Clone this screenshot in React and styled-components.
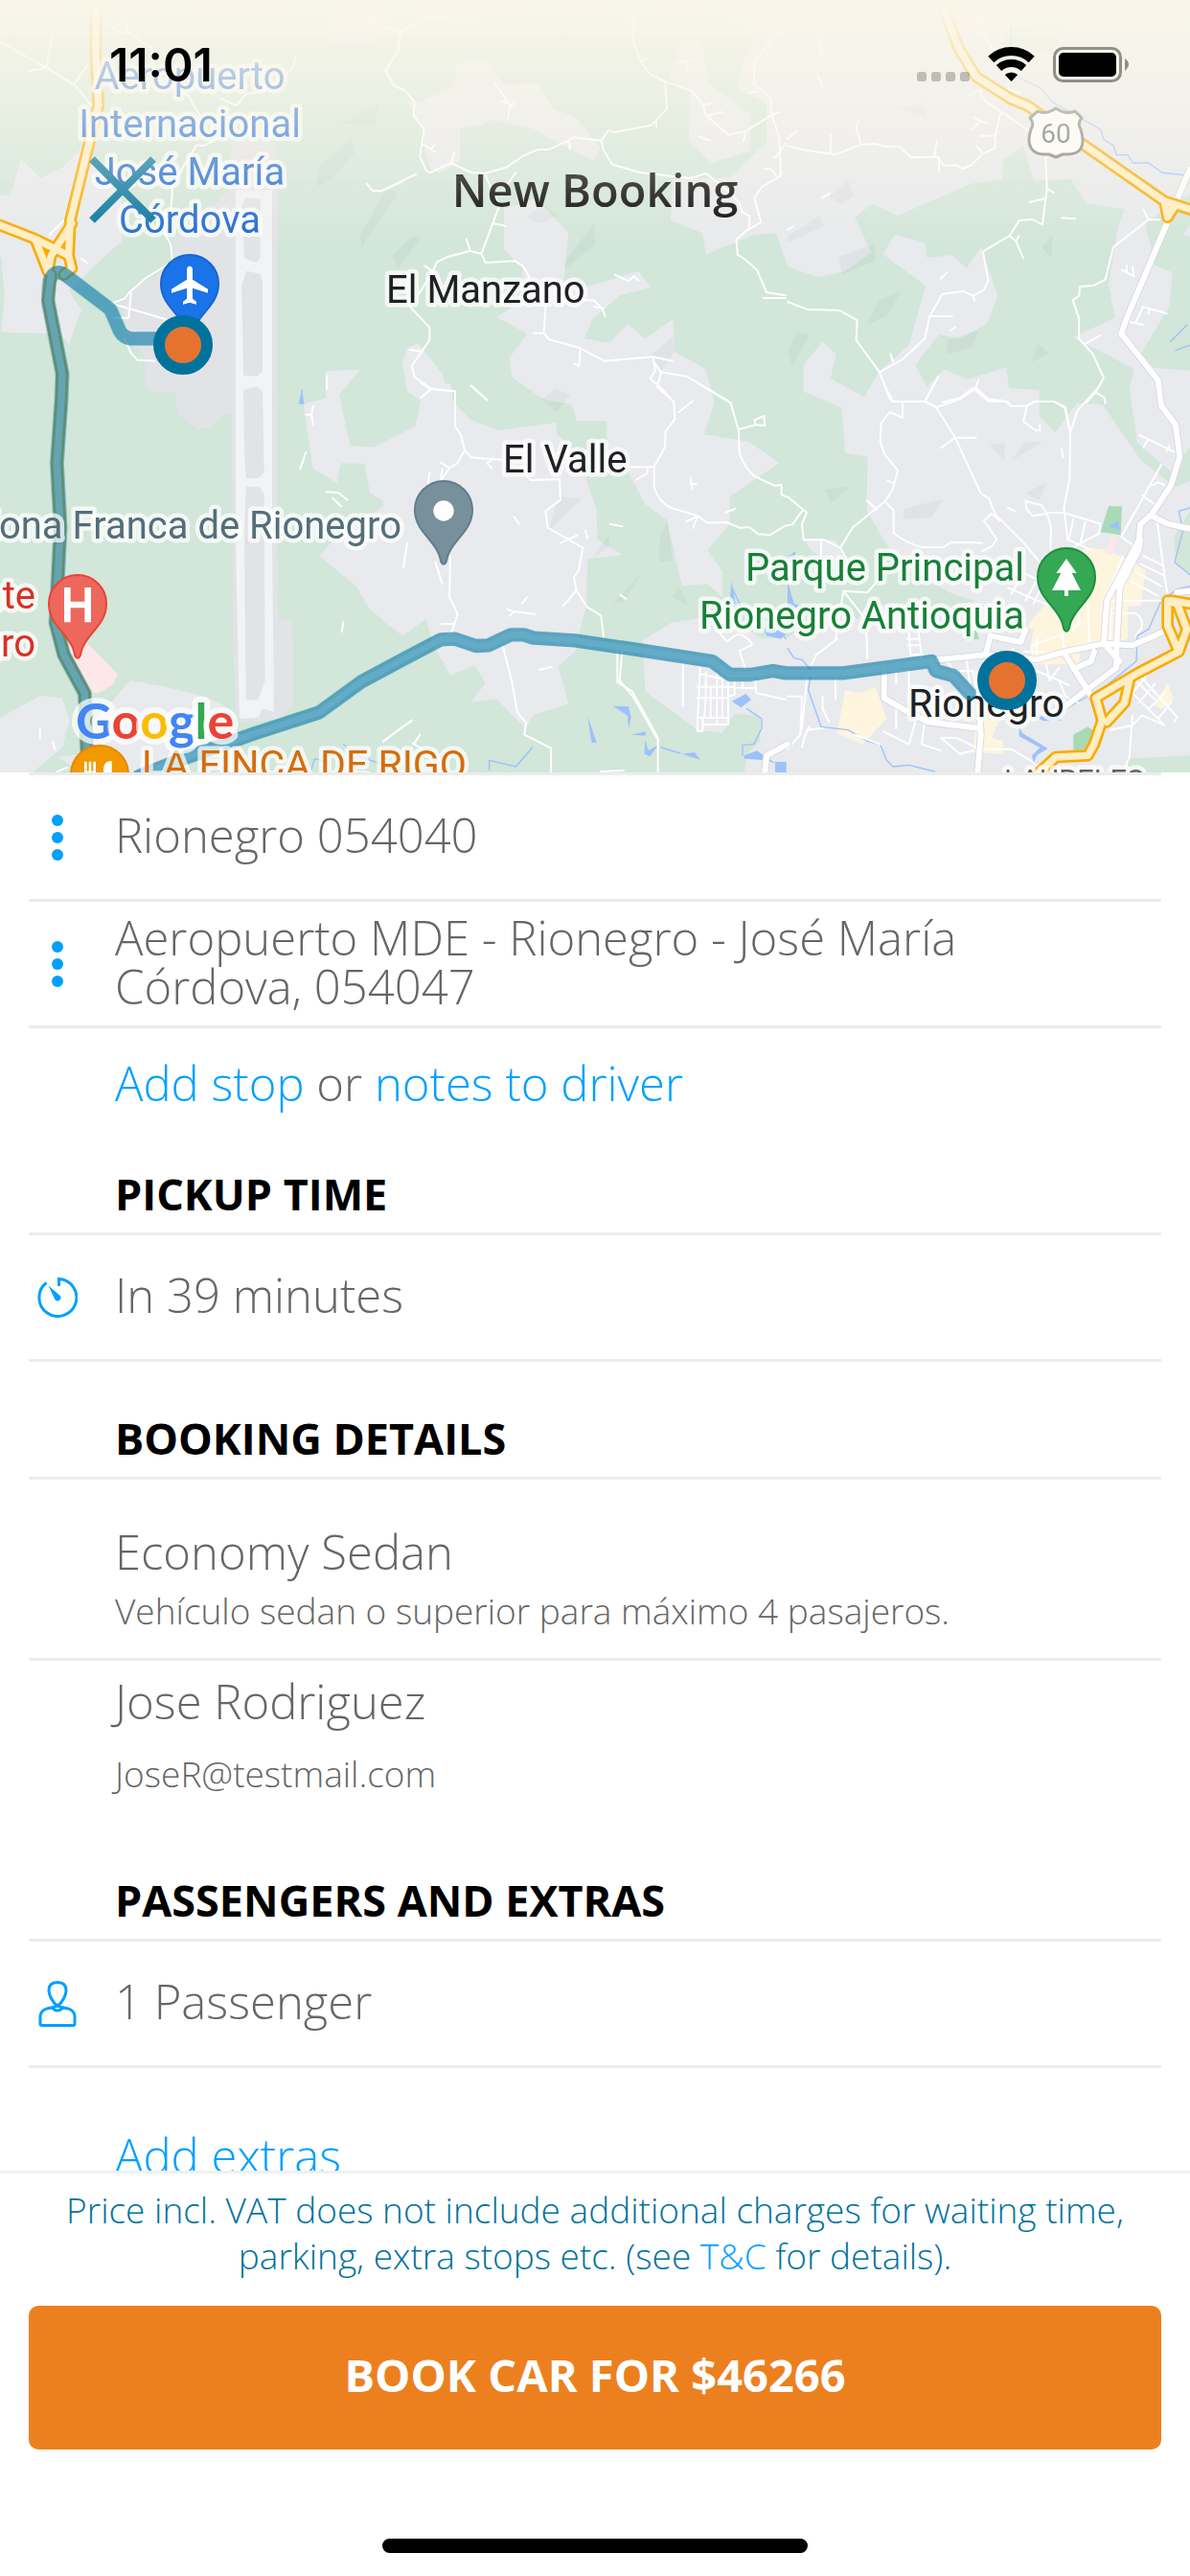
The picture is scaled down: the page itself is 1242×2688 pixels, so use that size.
import React from 'react';
import styled, { createGlobalStyle } from 'styled-components';

const GlobalStyle = createGlobalStyle`
  :root {
    --blue: #00a0ff;
    --teal: #00729c;
    --orange: #ec801f;
    --text: #666;
    --line: #ececec;
    --font-ui: 'Open Sans', 'Noto Sans', sans-serif;
    --font-map: Roboto, 'Liberation Sans', sans-serif;
    --font-status: Inter, 'Liberation Sans', sans-serif;
    --fz-lg: 49px;
    --fz-md: 45px;
    --fz-sm: 37px;
  }

  *,
  *::before,
  *::after {
    box-sizing: border-box;
  }

  body {
    margin: 0;
    background: #fff;
    color: var(--text);
    font-family: var(--font-ui);
    font-weight: 330;
  }

  a {
    color: var(--blue);
    text-decoration: none;
  }
`;

const Screen = styled.div`
  display: flex;
  flex-direction: column;
  height: 100vh;
  overflow: hidden;
`;

const MapArea = styled.header`
  position: relative;
  flex: none;
  height: 806px;
  overflow: hidden;
`;

const MapCanvas = styled.svg`
  position: absolute;
  inset: 0;
  width: 100%;
  height: 100%;
  font-family: var(--font-map);
  font-weight: 400;
`;

const TopBar = styled.div`
  position: relative;

  &::after {
    content: '';
    position: absolute;
    inset: 0;
    background: linear-gradient(#faf6ea, rgba(250, 246, 234, 0));
    pointer-events: none;
  }
`;

const StatusBar = styled.div`
  position: relative;
  z-index: 1;
  display: flex;
  align-items: center;
  height: 134px;
  padding: 0 64px 0 114px;
  color: #000;
`;

const Clock = styled.time`
  margin-right: auto;
  font-family: var(--font-status);
  font-size: 48px;
  font-weight: 600;
`;

const StatusIcons = styled.svg`
  width: 224px;
  height: 40px;
`;

const NavBar = styled.div`
  display: grid;
  grid-template-columns: 1fr auto 1fr;
  align-items: center;
  height: 128px;
  padding: 0 92px;
`;

const CloseButton = styled.button`
  justify-self: start;
  width: 72px;
  height: 72px;
  padding: 0;
  border: 0;
  background: none;
  color: var(--teal);

  svg {
    display: block;
  }
`;

const Title = styled.h1`
  margin: 0;
  color: #000;
  font-size: 47px;
  font-weight: 600;
  line-height: 60px;
`;

const Details = styled.main`
  flex: 1;
  min-height: 0;
  padding: 0 30px;
  overflow: hidden;
`;

const Section = styled.section`
  border-top: ${({ $first }) => ($first ? '3px solid var(--line)' : '0')};
`;

const Heading = styled.h2`
  margin: ${({ $gap }) => $gap}px 0 0;
  padding: 0 0 10px 90px;
  border-bottom: 3px solid var(--line);
  color: #000;
  font-size: var(--fz-md);
  font-weight: 700;
  line-height: 60px;
`;

const Row = styled.div`
  display: grid;
  grid-template-columns: 60px 1fr;
  column-gap: 30px;
  align-items: center;
  min-height: 132px;
  border-bottom: 3px solid var(--line);

  svg {
    justify-self: center;
    color: var(--blue);
  }
`;

const RowText = styled.p`
  max-width: 960px;
  margin: 0;
  padding-bottom: 4px;
  font-size: var(--fz-lg);
  line-height: 51px;
`;

const Links = styled.p`
  margin: ${({ $gap }) => $gap}px 0 0;
  padding-left: 90px;
  font-size: var(--fz-lg);
  line-height: 51px;
`;

const Info = styled.div`
  display: flex;
  flex-direction: column;
  gap: ${({ $gap }) => $gap}px;
  padding: ${({ $top }) => $top}px 0 ${({ $bottom }) => $bottom}px 90px;
  border-bottom: ${({ $divider }) => ($divider ? '3px solid var(--line)' : '0')};
`;

const InfoTitle = styled.p`
  margin: 0;
  font-size: var(--fz-lg);
  line-height: 51px;
`;

const InfoNote = styled.p`
  margin: 0;
  font-size: var(--fz-sm);
  line-height: 48px;
`;

const Footer = styled.footer`
  display: flex;
  flex: none;
  flex-direction: column;
  align-items: center;
  padding: 14px 30px 24px;
  border-top: 3px solid #f0f0f0;
`;

const PriceNote = styled.p`
  max-width: 1140px;
  margin: 0 0 28px;
  color: var(--teal);
  font-size: var(--fz-sm);
  line-height: 48px;
  text-align: center;
`;

const BookButton = styled.button`
  width: 100%;
  height: 150px;
  padding: 0 0 6px;
  border: 0;
  border-radius: 10px;
  background: var(--orange);
  color: #fff;
  font-family: var(--font-ui);
  font-size: 47px;
  font-weight: 700;
`;

const HomeIndicator = styled.div`
  width: 444px;
  height: 15px;
  margin-top: 93px;
  border-radius: 8px;
  background: #000;
`;

// The map is drawn in six tiles, three drawing units to a pixel.
const TILES = {
  nw: [0, 0],
  n: [400, 0],
  ne: [822, 0],
  sw: [0, 400],
  s: [400, 400],
  se: [822, 400],
};

const GREEN = '#d2e6da';
const GREY = '#e8eaed';
const AIRPORT = '#e2e3e7';

const LAND = [
  ['nw', GREY, 'M0 612 33 612 65 498 128 557 195 525 272 445 300 520 380 560 382 755 330 800 215 910 255 970 215 1080 190 1045 4 1040 14 920 5 820 0 795Z'],
  ['nw', GREY, 'M1020 1162 1127 1157 1062 1237 1062 1260 1020 1260Z'],
  ['nw', GREY, 'M1030 60 1110 20 1220 50 1190 130 1025 135Z'],
  ['nw', AIRPORT, 'M545 745 645 665 720 590 725 440 860 440 870 600 868 1600 872 1940 915 1940 918 2205 870 2255 760 2260 740 2240 730 2030 725 1297 695 1297 660 1338 620 1343 555 1295 550 1227 470 1227 455 1210 452 1110 400 1060 385 950 415 910 540 830Z'],
  ['nw', '#f1f3f5', 'M738 595H852L852 1700 858 2228 822 2218 810 2245 750 2250 742 1900 738 1700Z'],
  ['nw', AIRPORT, 'M757 640 770 618 815 625 815 805 805 822 765 810ZM757 890 772 848 815 857 822 880 822 1160 805 1178 762 1175ZM762 1220 805 1210 822 1225 827 1480 810 1497 770 1497 765 1400ZM770 1523 810 1523 827 1545 830 2130 808 2192 770 2190 765 1700Z'],
  ['n', GREY, 'M75 315 110 320 225 270 228 200 315 178 380 265 485 260 530 340 605 370 680 465 655 503 470 405 345 375 295 395 240 402 240 505 178 543 150 530 130 470 128 405 100 370Z'],
  ['n', GREY, 'M935 125 995 125 1020 265 1152 360 1145 475 1025 510 957 440 960 290 895 250Z'],
  ['n', GREY, 'M378 655 480 620 580 730 565 880 630 900 800 848 838 900 740 925 655 1000 630 1060 710 1073 765 1013 818 1060 908 1000 912 1100 1010 1155 1035 1260 510 1260 403 1180 395 1120 450 1045 355 993 440 940 435 840 378 780Z'],
  ['n', GREY, 'M60 1140 75 1090 110 1075 130 1100 185 1170 212 1260 85 1260 75 1225Z'],
  ['n', GREY, 'M1040 0 1155 120 1105 275 1200 325 1200 445 1085 557 905 560 900 690 1000 730 1010 797 1160 735 1230 730 1266 835 1300 0Z'],
  ['ne', GREY, 'M0 0H1260V2420H0Z'],
  ['s', GREY, 'M0 0H1266V1220H0Z'],
  ['sw', GREY, 'M1000 540 1040 495 1215 375 1158 345 1142 252 1067 250 1055 312 980 268 950 65 1022 45 1022 0 1085 0 1062 37 1097 195 1170 200 1260 155 1260 790 1155 705 1115 635Z'],
  ['sw', GREY, 'M290 1060 355 990 408 930 520 950 640 980 695 1005 740 1040 700 1130 640 1150 480 1220 290 1220ZM0 1047 125 978 195 985 218 1055 195 1140 100 1220 0 1220ZM180 1170 250 1160 260 1220Z'],
  ['sw', '#fce8e6', 'M195 785 270 810 370 912 352 945 310 968 280 970Z'],
  ['s', GREEN, 'M0 0 70 0 75 25 118 55 100 135 0 185Z'],
  ['s', GREEN, 'M210 0 220 60 275 115 365 147 540 123 545 160 600 215 645 280 635 300 668 395 670 490 750 537 640 550 635 700 600 840 548 885 580 1003 470 1038 445 1080 355 988 275 998 320 938 285 882 210 915 155 815 135 738 60 790 0 745 0 1220 1130 1220 1140 1160 1180 1120 1180 1040 1100 1035 1062 1095 985 1085 820 965 812 805 900 750 1080 720 1180 797 1270 795 1270 -20 1020 -10 1037 60 1005 160 1145 183 1240 250 1085 355 1085 440 1015 522 1062 590 1062 670 1015 628 935 635 888 428 820 378 765 275 700 270 700 118 605 118 590 65 505 52 430 0Z'],
  ['ne', GREEN, 'M262 790 210 680 265 638 345 675 580 573 672 563 675 500 738 460 772 567 885 560 935 637 1055 655 1035 710 1005 890 1025 995 893 1055 1085 1155 1070 1215 1095 1385 1200 1475 1260 1400 1260 1505 1215 1525 1110 1445 985 1265 905 1262 838 1355 788 1300 788 1220 693 1215 685 1150 565 1187 490 1157 437 1210 400 1143 475 1047 540 1060 625 1013 658 925 605 775 560 840 515 798 437 807 430 760 335 735 298 795 432 895 380 1080 285 1165 240 1243 135 1185 152 1108 110 1070 50 1140 50 1225 -10 1210 -10 832 95 868 180 850Z'],
  ['ne', GREEN, 'M1120 700 1150 830 1205 852 1195 960 1105 1110 1150 1152 1260 1160 1260 740 1236 735 1260 705 1260 610 1200 640ZM680 85 880 75 830 160 680 150Z'],
  ['se', GREEN, 'M-10-5 48 0 48 25 170 77 180 218 250 230 248 400 318 518 400 600 530 665 590 680 480 705 350 690 240 700 220 740 190 710 150 690 90 750 -6 795Z'],
  ['se', GREEN, 'M1060 1175 1260 1165 1260 1220 1075 1220ZM1210 480 1260 400 1260 600 1215 560Z'],
  ['se', GREY, 'M48 488 150 490 182 560 80 530Z'],
  ['se', '#a8dab5', 'M1005 385H1047L1043 475 980 465ZM895 1100 940 1075 955 1085 945 1145 895 1150ZM545 805 590 770 600 800Z'],
  ['se', '#fdf5de', 'M930 515 1000 520 1122 585 1105 695 1065 700 1065 800 915 830 915 880 780 880 760 830 770 770 745 765 800 700 900 560ZM180 960 225 970 275 950 310 1050 235 1130 155 1095ZM590 1040 660 1060 640 1110 675 1120 675 1160 582 1155ZM1190 938 1210 990 1170 1020 1145 1005Z'],
  ['se', '#fce8e6', 'M1015 478 1035 482 1015 540 992 530Z'],
];

// Slightly darker hill shading.
const RELIEF = [
  ['nw', 'M1000 520 1100 430 1110 480 1040 560 990 585ZM1065 390 1185 325 1175 390ZM1125 740 1210 590 1245 605 1135 770Z'],
  ['n', 'M30 800 90 740 120 742 45 840ZM660 700 662 765 570 842 565 825ZM450 680 500 640 548 675 490 700ZM495 1250 540 1218 585 1235 545 1290ZM840 1110 905 1055 912 1100 870 1160Z'],
  ['ne', 'M345 338 425 320 438 370ZM130 615 190 563 207 612 170 640ZM0 740 98 678 113 708 0 760ZM160 803 272 765 275 815 170 860ZM285 940 355 912 310 990 250 1015ZM797 775 832 730 825 807ZM500 1065 595 1035 580 1085 500 1110ZM0 1100 30 1040 70 1048 15 1145ZM760 1135 785 1077 820 1108Z'],
  ['s', 'M515 465 550 355 620 362 560 420ZM655 545 710 470 705 515ZM865 560 865 490 890 428 905 555ZM720 690 805 600 750 685ZM905 670 925 635 955 695Z'],
  ['se', 'M115 332 200 323 137 373ZM363 393 487 362 450 420 363 425ZM632 192 680 188 678 240ZM705 240 740 185 800 182ZM745 343 810 312 790 365Z'],
];

const WATER_AREAS = [
  ['s', 'M720 1010 768 1012 776 1045 768 1080 765 1040ZM640 1040 668 1125 652 1125ZM775 1100 822 1090 820 1103ZM820 1115 830 1150 860 1133 835 1168 818 1160ZM935 1160 975 1155 992 1178ZM1092 995 1135 972 1152 990 1120 1015ZM1090 620 1103 690 1085 690ZM1190 765 1240 775 1260 785 1245 800 1200 790ZM1130 1165 1170 1150 1230 1190 1195 1180 1130 1175ZM1227 1185H1262V1220H1227Z'],
  ['sw', 'M945 20 953 65 935 65Z'],
  ['se', 'M1005 448 1037 430 1038 460ZM0 620 20 690 50 700 0 705ZM5 540 25 525 22 560ZM780 1045 850 1035 855 1055 800 1057ZM725 1075 735 1095 815 1143 780 1165 770 1190 765 1165 790 1140 725 1105Z'],
];

const WATER_LINES = [
  ['nw', 'M945 1222V1260'],
  ['ne', 'M720 240 790 275 833 322 980 405 990 437 1020 455 1030 485H1065L1082 510H1130L1172 540 1260 550M668 40 700 60V160M1198 1070 1250 1018M1215 1097 1260 1080'],
  ['s', 'M1138 1018 1185 1050V1080L1160 1130 1125 1133V1165M1260 800 1220 745 1130 720 1092 640M332 1210V1180L415 1200 467 1140M870 1140 930 1158'],
  ['sw', 'M1075 1130 1130 1170 1250 1210M975 1210 985 1175 1025 1185'],
  ['se', 'M0 830 20 860 45 865 75 900 65 960 105 1075 190 1085 250 1120 290 1130 310 1180 330 1200 380 1195 460 1215M1260 390 1225 400 1238 460 1212 560 1260 600M1260 635 1220 645 1170 680 1130 770 1095 790 1092 870 1000 945 870 1020 800 1050'],
];

const SMALL_ROADS = [
  ['nw', 'M0 130 145 212 230 265 250 285 285 330M163 112 145 212 92 222M272 205 232 265M335 70 375 105 400 100 385 30M400 100 475 150 480 240 590 300 625 360M690 308 740 330 770 295 830 285 915 215 928 170M720 415 640 455 615 455 575 520 540 590 535 660M515 730 535 765 540 820M525 828 460 868 405 915 390 935 350 950 520 1000M410 918 403 995H360M390 1060 410 1105 430 1127 485 1130M155 735 200 690M255 810 275 825M1148 575 1167 598H1195L1260 568M1160 45 1165 70 1250 98 1247 160 1207 220 1230 265 1260 280M1023 1175V1218'],
  ['n', 'M0 85 55 100 160 50 208 52 210 68 280 67 298 40M55 100 45 160 8 222 35 268 70 285 98 320 95 362 128 405 115 490 135 535 148 540 212 510 275 540 320 542 385 524 440 487 485 468H518L580 440 595 430 683 440 705 408 722 414 840 392 888 340 882 255M125 452 163 475M160 455 150 465M222 478 212 510M350 262 398 330 390 370M410 320 395 340M368 318 390 322M580 440 585 467M855 380V398M683 440 690 470 717 515 805 540 960 558 1010 543 1060 580 1115 635 1122 662 1147 677 1145 715 1105 750 1110 798 1130 810 1170 845 1200 915 1260 925M0 595 103 545M318 542 345 610 365 640 307 795 320 822 412 817 437 832 460 872M345 700 383 707M307 795 272 785 200 805 168 820 155 850 130 832M260 748 272 785M155 850 85 962 145 1025V1065L90 1145 98 1180 150 1217 225 1225V1260M120 1243 150 1217M118 1100 82 1095M275 1207 325 1252M415 540 380 590M510 930 503 1043 518 1062 617 1090 692 1130 845 1117 852 1160 835 1185 880 1225M470 1043H503M617 1090 613 1147 600 1138M845 1117 905 1130M852 1140 870 1165 950 1178 1085 1258M870 1165 858 1212 910 1258M550 940H660L685 965 695 990M660 960 690 965M725 860 768 880 785 865 800 878M765 25 785 70 783 130 808 195 835 232 882 255 965 285 1000 325 1010 360 1080 422 1135 410 1200 370 1217 360M808 195 830 180M1000 330 1027 323M1013 362 1062 350M1135 410 1128 440M990 428 1023 440M925 195 970 188M945 195 952 218M1250 90 1163 190 1160 262 1213 305 1217 360 1240 430 1245 550 1185 585 1162 620 1183 695 1145 718M1140 290 1175 286M1217 360 1245 350M1195 528 1215 530 1230 550M1190 933H1260M1260 450 1225 495'],
  ['ne', 'M0 457 55 470 150 483 230 453 275 450 300 458H350L385 492H470L488 518 530 517 548 528 575 517 610 482 650 463V425L668 350 610 310 603 280 570 298M135 422V480M0 435 28 410M222 375 215 400 230 453M467 440 460 492M473 495 475 537M592 458 610 480M668 350 755 408M603 425 650 425M583 368 603 380 578 405M603 380 625 385M605 30 608 100 640 150M690 250 692 280 730 292M808 490 812 590 798 703 765 686 725 690 695 738 612 787 628 878 615 908 582 926 550 912 485 920 445 990 430 1060 360 1125 288 1165 215 1065 218 1003 165 972 60 968 0 945M812 590 833 603M757 633 810 620M695 738 715 755 738 808M725 738 715 755M858 682 900 685M445 990H515M480 872 498 853M510 1035 525 1025M582 926 585 942M288 1165 320 1248 330 1257H430L472 1178M322 1108 330 1132M430 1257 460 1272M485 1260 540 1245 580 1215 630 1257H690L700 1272M598 1190 588 1217M770 1257H835L870 1275 885 1350M935 1260 965 1228 990 1183 955 1107 912 1060V995L893 940 913 925 915 898 960 893 995 875 1020 773 1130 688H1165M1115 658 1130 688M930 1078 978 1050M965 1228 992 1245 995 1262M1047 845 1085 865 1080 835M1062 832V850M1090 1010 1113 960 1187 982M1130 965V982M1070 1007 1113 1017M93 118 108 160 100 175M93 235 108 270M108 620 132 605M0 720 15 710'],
  ['sw', 'M980 72 975 98 980 128M958 98H975M958 215 940 268M1022 340 1060 343 1088 365M1042 360 1068 385M1075 748 1070 778M125 1083V1113M165 1123 173 1147M180 1215 210 1203M1200 1122 1260 1075M1023 0V18'],
  ['s', 'M118 0 150 18 225 25V135L243 162 255 210 275 232 380 240M150 18 118 45M275 8 325 52M255 210 232 250 208 265 175 310M180 248 208 265M145 278 140 320M185 268 180 300M345 235 325 250 340 265M430 265 460 303 552 300 555 365 508 400 515 452 625 515 612 585 597 607 605 648 638 700 682 727 690 795M605 648 563 697M555 500 608 475M410 418 425 440M633 460 640 485M710 440 748 448M742 662 760 675M388 708 410 715 475 722M395 728 410 715M435 688 450 670M210 540 207 668 233 722 215 778 195 795M183 753H220M75 500 63 577M163 560 185 628M375 825 403 935 420 1030 447 1062 442 1100 525 1142V1220M488 897 526 888M0 1120 90 1055M92 1127 150 1160M115 1100 95 1130M855 0 910 58 913 112 883 152V198L848 262V322Q860 370 900 390L985 415 1015 437 1075 435 1115 452 1145 450 1175 472 1210 475 1260 445M773 262H848M795 300 827 282V262M925 90 970 55M985 415 950 432M985 415 970 453M1073 405 1102 392M962 295 968 332M962 315H980M985 0 1088 62 1112 145 1115 220Q1135 270 1165 292L1225 320 1247 318V348L1260 355M1112 145 1165 130 1195 132 1192 102 1162 115 1165 130M680 1215 753 1212M733 838V935L780 965 860 1110V1220M748 838 740 930 785 985 862 1120M938 878V1012M1040 765 1075 808 1110 785Q1140 790 1155 818L1115 838 1135 895'],
  ['s', 'M992 890 983 1088H1000V1047H1080V930H1165L1168 970 1260 990M983 950H1080L1165 955M983 985H1080M1010 905V985M1045 905V1068M1062 915V1047M1025 950V1047M1010 985 1005 1047M1000 1068H1080V1047M983 1047H1010M1080 980 1100 975V935M1125 935V955M992 910 1080 930'],
  ['se', 'M300 0 330 57H430L465 75 525 170 605 345 630 360 650 410 740 500 790 560M430 57 460 0M525 170H590M525 170 480 202M360 60V108L320 90 293 125 290 180 303 222 345 272 330 330 305 370 205 450 165 515 195 565 240 612M313 305 333 312M248 367 280 395M305 370 332 398V468Q370 500 420 513L490 512 510 498H580L610 500M610 525 640 510 655 488 615 430 638 408 665 430M465 75 540 50 590 15 630 50 680 55 700 72 750 70 775 57H835L868 77 885 155 883 300 865 390 877 490M885 155 908 85 975 10M750 70 738 120 778 148H790V130M858 205 863 232M745 368 795 382 812 408 768 415 748 395ZM812 408 825 450 823 520M812 405H865L980 440 975 470 900 510M895 425 880 490M932 435 918 495M880 490 950 520M690 390 712 400M0 355 60 405 45 440 50 490H115L165 515M45 400 15 442 0 445M105 490V540M0 980H45L40 1100 0 1145M68 1075 55 1100 45 1140M50 905 60 930 45 1080M155 800 90 850 75 880M175 650 150 800M175 650 250 655 280 620M175 650 245 740 250 860M1000 665 1050 540M1102 162 1130 175 1210 215M1130 175 1115 200M1195 195 1188 212M1045 480 1170 255M1140 320 1160 310 1180 318M1110 350 1150 380 1180 600 1190 665M1085 405 1045 480 1085 510M1115 540 1175 570M1105 565 1175 600M1090 590 1170 635M1075 620 1160 665M1000 680H1180M1000 720H1090Q1115 735 1108 765L1090 790'],
  ['se', 'M690 640 830 700M730 590 860 650M745 680 790 600M700 660 735 600M770 690 810 610M740 840H800V870M770 880 765 820 850 790M780 800 780 880M860 780 870 860M905 690 915 750 890 770M940 690 945 820M1010 690V800M380 780 385 850H425M375 800H415M375 820H415M410 780 420 860M300 900H380V990M340 890V940M500 870 520 900 580 900 590 950M560 860 570 940M660 840 650 890M700 850 705 830M780 900 850 930 880 945M810 880 820 930 850 890M850 930 870 980 910 1000M440 970 420 1130 480 1150M400 1060 380 1130 340 1110 300 1090M340 1000V1080M480 1110 540 1160 580 1150M480 1110H530L600 1145M610 1145H700L760 1180 800 1215M1080 1040 1070 1170 1050 1218M1010 1085 1080 1070 1110 1040 1180 1070M1090 900 1220 1045 1210 1060M1060 950 1180 1070M1080 920 1150 990M1120 920 1080 970M1150 940 1100 1000M1180 970 1130 1020M1200 1000 1160 1050M590 900 600 1000M110 980V1020L130 1060M110 1080 60 1085M150 990V910M210 1100 290 1130'],
];

const MAIN_ROADS = [
  ['ne', 'M1260 530 1230 600 1060 1000 1045 1045 1160 1190 1170 1270 1215 1330 1228 1430 1200 1520 1140 1610 1105 1640 1100 1690 1000 1880 990 2015M1140 1615 1190 1640 1260 1655M1105 1690 1100 1720 1040 1840 1030 2020'],
  ['se', 'M470 865 620 850 635 790 730 810 745 770M620 850 780 865 870 840 990 815 1080 820 1150 790 1190 770M870 850 970 1010M1030 820 1030 890 870 1010 830 1030M303 900 302 985 380 1030 440 1060 600 1080M600 1000 605 1100 595 1220M990 815 1040 870M960 840 950 870 905 890M1220 655 1260 650'],
  ['s', 'M1195 1220 1200 1165 1266 1130'],
];

const MOTORWAYS = [
  ['nw', 'M300 0 300 170 308 330 220 690 215 800 225 840 200 860M0 705 110 748 150 850M110 748 215 800M225 700 160 800 150 850M160 860 150 940 195 1170 192 1250 178 1450 189 1650 174 1950 200 2050 265 2170 275 2420'],
  ['ne', 'M480 0 535 150 590 240 700 310 750 330 1180 630 1260 655M1180 630 1190 680 1215 640'],
  ['se', 'M780 1225 840 1170 940 1165 960 1130 985 1055 965 985 1100 905 1225 840 1190 760 1190 680 1220 690 1250 770 1225 840M1070 930 1055 1000 1000 1060M1200 680 1260 690'],
];

const ROUTE = [
  ['nw', 'M570 1060H410Q380 1055 370 1025L345 968 210 865Q170 835 155 880L150 940 195 1170 192 1250 178 1450 189 1650 174 1950 200 2050 265 2170 275 2420'],
  ['sw', 'M435 1230 560 1180 800 1095 1000 1030 1130 935 1260 865 1380 802 1425 800 1490 822 1530 820 1600 787 1640 787 1670 797 1800 805 1970 830 2230 870 2285 912 2350 912 2420 900 2460 907 2640 907 2916 870 2930 900 2985 915 3035 970'],
];

const PIN = 'M0 170Q-8 170-11 150C-24 95-90 70-90 0A90 90 0 0 1 90 0C90 70 24 95 11 150Q8 170 0 170Z';

const Layer = ({ items, ...props }) => (
  <g strokeLinejoin="round" strokeLinecap="round" {...props}>
    {items.map(item => {
      const [x, y] = TILES[item[0]];
      const d = item[item.length - 1];
      return (
        <path
          key={d}
          d={d}
          fill={item.length === 3 ? item[1] : undefined}
          transform={`translate(${x} ${y}) scale(${1 / 3})`}
        />
      );
    })}
  </g>
);

const Pin = ({ x, y, fill, stroke, children }) => (
  <g transform={`translate(${x} ${y}) scale(${1 / 3})`}>
    <path d={PIN} fill={fill} stroke={stroke} strokeWidth="6" />
    {children}
  </g>
);

const Marker = ({ x, y }) => (
  <circle cx={x} cy={y} r="25" fill="#e5732f" stroke="#00729c" strokeWidth="12" />
);

const Label = styled.text`
  fill: ${({ $color }) => $color};
  font-size: ${({ $size }) => $size || 40}px;
  paint-order: stroke;
  stroke: rgba(255, 255, 255, 0.72);
  stroke-width: 9px;
  stroke-linejoin: round;
`;

const Wordmark = styled(Label)`
  font-family: Lato, 'Open Sans', sans-serif;
  font-weight: 700;
  stroke-width: 12px;
`;

const RouteMap = () => (
  <MapCanvas
    viewBox="0 0 1242 806"
    preserveAspectRatio="xMidYMin slice"
    role="img"
    aria-label="Route map"
  >
    <rect width="1242" height="806" fill={GREEN} />
    <Layer items={LAND} />
    <Layer items={RELIEF} fill="#5f7f74" fillOpacity=".06" />
    <Layer items={WATER_AREAS} fill="#9dc1fb" />
    <Layer items={WATER_LINES} fill="none" stroke="#9dc1fb" strokeWidth="4" />
    <Layer items={SMALL_ROADS} fill="none" stroke="#fff" strokeWidth="6" />
    <Layer items={MAIN_ROADS} fill="none" stroke="#d5d8dc" strokeWidth="23" />
    <Layer items={MAIN_ROADS} fill="none" stroke="#fff" strokeWidth="18" />
    <Layer items={MOTORWAYS} fill="none" stroke="#f9ab00" strokeWidth="38" />
    <Layer items={MOTORWAYS} fill="none" stroke="#ffeec3" strokeWidth="22" />
    <Layer items={ROUTE.slice(1)} fill="none" stroke="#fff" strokeWidth="20" />
    <Label x="948" y="748" $size={41} $color="#202124">Rionegro</Label>
    <g opacity=".66">
      <Layer items={ROUTE} fill="none" stroke="#1580aa" strokeWidth="43" />
    </g>

    {/* highway shield */}
    <g>
      <path
        d="M1083 116q9 4 19-3q10 7 20 3l7 7q-5 6-1 12c6 20-2 26-14 26h-5l-7 3-7-3h-5c-12 0-20-8-14-26q4-6-1-12Z"
        fill="#fff"
        stroke="#777"
        strokeWidth="3"
        strokeLinejoin="round"
      />
      <text x="1102" y="149" textAnchor="middle" fontSize="28" fill="#5f6368">60</text>
    </g>

    <Label x="198" y="93" textAnchor="middle" $color="#1967d2">Aeropuerto</Label>
    <Label x="198" y="143" textAnchor="middle" $color="#1967d2">Internacional</Label>
    <Label x="198" y="193" textAnchor="middle" $color="#1967d2">José María</Label>
    <Label x="198" y="243" textAnchor="middle" $color="#1967d2">Córdova</Label>
    <Label x="403" y="316" $color="#202124">El Manzano</Label>
    <Label x="525" y="493" $color="#202124">El Valle</Label>
    <Label x="419" y="562" textAnchor="end" $color="#546e7a">Zona Franca de Rionegro</Label>
    <Label x="37" y="635" textAnchor="end" $color="#d93025">ente</Label>
    <Label x="37" y="685" textAnchor="end" $color="#d93025">egro</Label>
    <Label x="1069" y="606" textAnchor="end" $color="#188038">Parque Principal</Label>
    <Label x="1069" y="656" textAnchor="end" $color="#188038">Rionegro Antioquia</Label>
    <Label x="148" y="812" $size={41} $color="#d56e0c">LA FINCA DE RIGO</Label>
    <Label x="1048" y="825" $size={31} $color="#5f6368">LAURELES</Label>

    <Pin x={198} y={296} fill="#1a73e8" stroke="#1765cc">
      <path
        d="M21 16v-2l-8-5V3.5c0-.83-.67-1.5-1.5-1.5S10 2.67 10 3.5V9l-8 5v2l8-2.5V19l-2 1.5V22l3.5-1 3.5 1v-1.5L13 19v-5.5l8 2.5z"
        transform="translate(-69 -67) scale(6)"
        fill="#fff"
      />
    </Pin>
    <Pin x={463} y={532} fill="#78909c" stroke="#607d8b">
      <circle cy="3" r="32" fill="#fff" />
    </Pin>
    <Pin x={81} y={630} fill="#ee675c" stroke="#ea4335">
      <path d="M-32-51V58M32-51V58M-32 3H32" stroke="#fff" strokeWidth="20" />
    </Pin>
    <Pin x={1113} y={602} fill="#34a853" stroke="#1e8e3e">
      <path d="M0-57 32-12H17L45 42H6V60H-6V42H-45L-17-12H-32Z" fill="#fff" />
    </Pin>
    <Pin x={104} y={808} fill="#f29900" stroke="#ea8600">
      <path d="M-48-40h8v30h6v-30h8v30h6v-30h8v45h-36ZM12 5V-20Q15-42 38-42V5Z" fill="#fff" />
    </Pin>

    <Wordmark x="79" y="771" $size="52">
      <tspan fill="#4285f4">G</tspan>
      <tspan fill="#ea4335">o</tspan>
      <tspan fill="#fbbc05">o</tspan>
      <tspan fill="#4285f4">g</tspan>
      <tspan fill="#34a853">l</tspan>
      <tspan fill="#ea4335">e</tspan>
    </Wordmark>

    <Marker x="191" y="360" />
    <Marker x="1051" y="710" />
  </MapCanvas>
);

const DotsIcon = () => (
  <svg width="12" height="48" viewBox="0 0 12 48" fill="currentColor" aria-hidden="true">
    <circle cx="6" cy="6" r="6" />
    <circle cx="6" cy="24" r="6" />
    <circle cx="6" cy="42" r="6" />
  </svg>
);

const TimerIcon = () => (
  <svg width="42" height="42" viewBox="0 0 42 42" fill="none" aria-hidden="true">
    <path d="M22.500 9V1.500A19.500 19.500 0 1 1 9.500 5.500" stroke="currentColor" strokeWidth="3" />
    <path d="M11.500 8.500 23.700 19A3.300 3.300 0 0 1 18.300 23Z" fill="currentColor" />
  </svg>
);

const PersonIcon = () => (
  <svg width="40" height="48" viewBox="0 0 40 48" fill="none" stroke="currentColor" strokeWidth="3" aria-hidden="true">
    <path d="M20 26C14 22 11 14 11 10C11 4 14 1.500 20 1.500S29 4 29 10C29 14 26 22 20 26Z" />
    <path d="M14 28C5 29 2 32 2 38V44.500Q2 46.500 4 46.500H36Q38 46.500 38 44.500V38C38 32 35 29 26 28" />
    <path d="M14 28 20 26 26 28Q20 34 14 28Z" />
  </svg>
);

const App = () => (
  <>
    <GlobalStyle />
    <Screen>
      <MapArea>
        <RouteMap />
        <TopBar>
          <StatusBar>
            <Clock>11:01</Clock>
            <StatusIcons viewBox="0 0 224 40" aria-hidden="true">
              <g fill="#000" opacity=".22">
                <rect x="3" y="28" width="10" height="10" rx="3" />
                <rect x="18" y="28" width="10" height="10" rx="3" />
                <rect x="33" y="28" width="10" height="10" rx="3" />
                <rect x="48" y="28" width="10" height="10" rx="3" />
              </g>
              <g fill="none" stroke="#000">
                <path d="M80.300 15A31 31 0 0 1 122.700 15" strokeWidth="9" />
                <path d="M88.500 24A19.500 19.500 0 0 1 114.500 24" strokeWidth="8" />
              </g>
              <path d="M101.500 38 94.800 31A10 10 0 0 1 108.200 31Z" />
              <rect x="146.500" y="3.500" width="69" height="34" rx="9" fill="none" stroke="#8f8e89" strokeWidth="3" />
              <rect x="151" y="8" width="60" height="25" rx="5" />
              <path d="M220 14Q228 20 220 27Z" fill="#8f8e89" />
            </StatusIcons>
          </StatusBar>
          <NavBar>
            <CloseButton type="button" aria-label="Close">
              <svg width="72" height="72" viewBox="0 0 72 72">
                <path d="M4 4 68 68M68 4 4 68" stroke="currentColor" strokeWidth="8" />
              </svg>
            </CloseButton>
            <Title>New Booking</Title>
          </NavBar>
        </TopBar>
      </MapArea>

      <Details>
        <Section $first>
          <Row>
            <DotsIcon />
            <RowText>Rionegro 054040</RowText>
          </Row>
          <Row>
            <DotsIcon />
            <RowText>Aeropuerto MDE - Rionegro - José María Córdova, 054047</RowText>
          </Row>
          <Links $gap={32}>
            <a href="#stop">Add stop</a> or <a href="#notes">notes to driver</a>
          </Links>
        </Section>

        <Section>
          <Heading $gap={60}>PICKUP TIME</Heading>
          <Row>
            <TimerIcon />
            <RowText>In 39 minutes</RowText>
          </Row>
        </Section>

        <Section>
          <Heading $gap={50}>BOOKING DETAILS</Heading>
          <Info $top={50} $gap={12} $bottom={25} $divider>
            <InfoTitle>Economy Sedan</InfoTitle>
            <InfoNote>Vehículo sedan o superior para máximo 4 pasajeros.</InfoNote>
          </Info>
          <Info $top={17} $gap={26} $bottom={0}>
            <InfoTitle>Jose Rodriguez</InfoTitle>
            <InfoNote>JoseR@testmail.com</InfoNote>
          </Info>
        </Section>

        <Section>
          <Heading $gap={78}>PASSENGERS AND EXTRAS</Heading>
          <Row>
            <PersonIcon />
            <RowText>1 Passenger</RowText>
          </Row>
          <Links $gap={66}>
            <a href="#extras">Add extras</a>
          </Links>
        </Section>
      </Details>

      <Footer>
        <PriceNote>
          Price incl. VAT does not include additional charges for waiting time, parking, extra
          stops etc. (see <a href="#terms">T&amp;C</a> for details).
        </PriceNote>
        <BookButton type="button">BOOK CAR FOR $46266</BookButton>
        <HomeIndicator />
      </Footer>
    </Screen>
  </>
);

export default App;
